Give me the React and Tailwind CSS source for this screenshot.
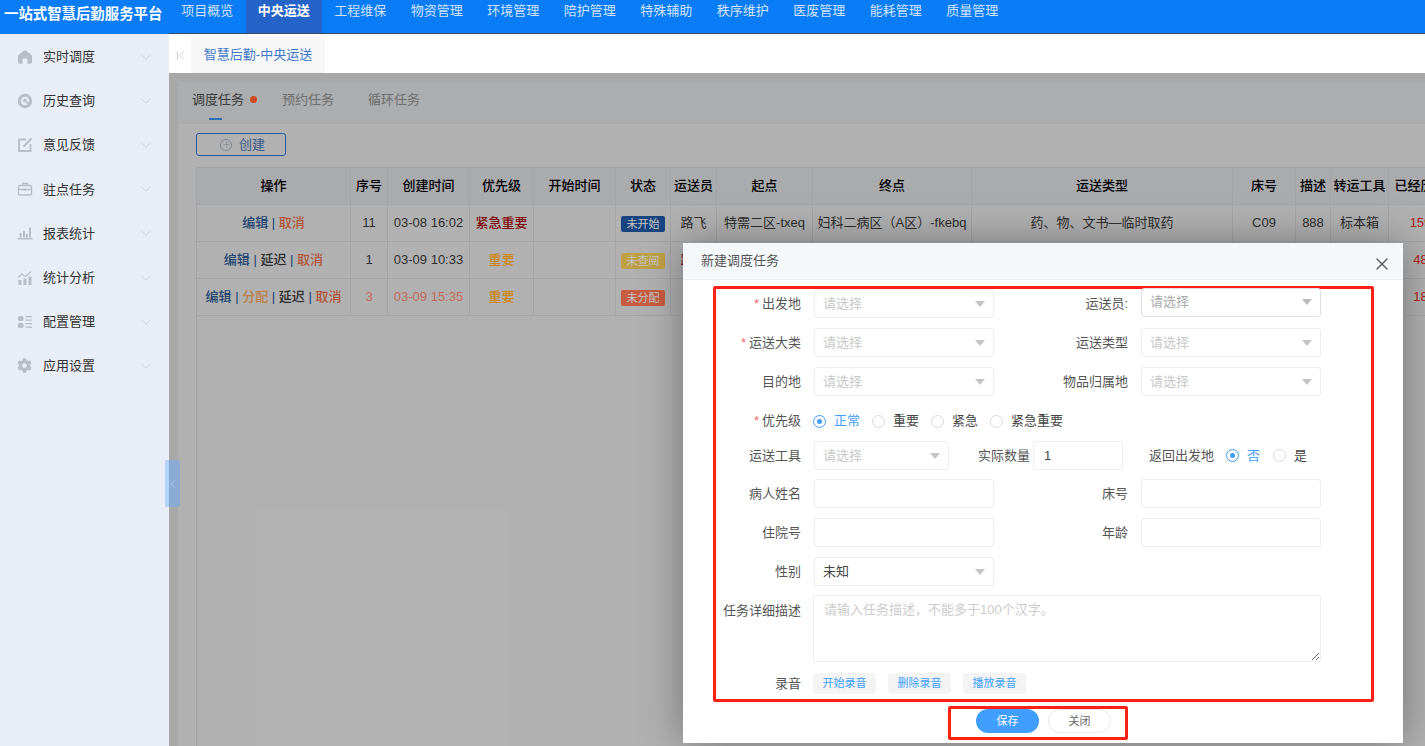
import { ChevronDown, ChevronFirst, ChevronLeft, Plus, X } from "lucide-react";
import { FaCog } from "react-icons/fa";

const navItems = ["项目概览", "中央运送", "工程维保", "物资管理", "环境管理", "陪护管理", "特殊辅助", "秩序维护", "医废管理", "能耗管理", "质量管理"];

const HomeIcon = () => (
	<svg width="16" height="16" viewBox="0 0 16 16" fill="#b9bdc9">
		<path d="M8 1.200c.4 0 .7.1 1 .4l5.300 4.200c.4.300.7.800.7 1.300V13c0 1-.8 1.700-1.700 1.700H10.500V10.500c0-.6-.4-1-1-1h-3c-.6 0-1 .4-1 1v4.200H2.700C1.800 14.700 1 14 1 13V7.100c0-.5.3-1 .7-1.300L7 1.600c.3-.3.600-.4 1-.4z" />
	</svg>
);

const HistoryIcon = () => (
	<svg width="16" height="16" viewBox="0 0 16 16" fill="none" stroke="#b9bdc9">
		<circle cx="8" cy="8" r="5.700" strokeWidth="3" />
		<circle cx="8" cy="7.500" r="1.500" fill="#b9bdc9" strokeWidth="1" />
		<path d="M9.500 9l3.500 2.500" strokeWidth="2" />
	</svg>
);

const EditIcon = () => (
	<svg width="16" height="16" viewBox="0 0 16 16" fill="none" stroke="#b9bdc9" strokeWidth="1.800">
		<path d="M9 2.500H2v11.500h11.500V7" />
		<path d="M6.500 9.500L14.500 1.500" strokeWidth="2.200" />
	</svg>
);

const CaseIcon = () => (
	<svg width="16" height="16" viewBox="0 0 16 16" fill="none" stroke="#b9bdc9" strokeWidth="1.300">
		<rect x="1.500" y="4.500" width="13" height="9.500" rx="1" />
		<path d="M5.500 4.500V2.500h5v2M1.500 8.500h13" />
		<rect x="6.700" y="7.500" width="2.600" height="2" fill="#b9bdc9" stroke="none" />
	</svg>
);

const BarsIcon = () => (
	<svg width="16" height="16" viewBox="0 0 16 16" fill="#b9bdc9">
		<rect x="0.500" y="13" width="15" height="1.500" />
		<rect x="2.500" y="8" width="2" height="4.500" />
		<rect x="6" y="6" width="2" height="6.500" />
		<rect x="9" y="9" width="2" height="3.500" />
		<rect x="12" y="2.500" width="2" height="10" />
	</svg>
);

const StatIcon = () => (
	<svg width="16" height="16" viewBox="0 0 16 16" fill="#b9bdc9">
		<rect x="1.500" y="10" width="3" height="5" />
		<rect x="6.500" y="8.500" width="3" height="6.500" />
		<rect x="11.500" y="6.500" width="3" height="8.500" />
		<path d="M1 7.500l4-3.500 3.500 2.500L14 1.500" fill="none" stroke="#b9bdc9" strokeWidth="1.200" />
	</svg>
);

const ListIcon = () => (
	<svg width="16" height="16" viewBox="0 0 16 16" fill="#b9bdc9">
		<rect x="1" y="2" width="5.500" height="5" rx="1.500" />
		<rect x="1" y="9" width="5.500" height="5" rx="1.500" />
		<rect x="8.500" y="2" width="6.500" height="1.300" />
		<rect x="8.500" y="5.500" width="6.500" height="1.300" />
		<rect x="8.500" y="9" width="6.500" height="1.300" />
		<rect x="8.500" y="12.500" width="6.500" height="1.300" />
	</svg>
);

const sideItems = [
	{ label: "实时调度", Icon: HomeIcon },
	{ label: "历史查询", Icon: HistoryIcon },
	{ label: "意见反馈", Icon: EditIcon },
	{ label: "驻点任务", Icon: CaseIcon },
	{ label: "报表统计", Icon: BarsIcon },
	{ label: "统计分析", Icon: StatIcon },
	{ label: "配置管理", Icon: ListIcon },
	{ label: "应用设置", Icon: () => <FaCog size={15} color="#b9bdc9" /> },
];

const Link = ({ className, children }) => <span className={className}>{children}</span>;
const Bar = () => <span className="text-[#24508c]"> | </span>;
const Edit = () => <Link className="text-[#30598f] font-medium">编辑</Link>;
const Cancel = () => <Link className="text-[#e06a48] font-medium">取消</Link>;
const Delay = () => <Link className="text-[#3a3a3a] font-medium">延迟</Link>;

const rows = [
	{
		actions: (
			<>
				<Edit />
				<Bar />
				<Cancel />
			</>
		),
		no: "11",
		time: "03-08 16:02",
		priority: "紧急重要",
		priorityCls: "text-[#a00c0c]",
		status: "未开始",
		statusCls: "bg-[#2056a0]",
		staff: "路飞",
		from: "特需二区-txeq",
		to: "妇科二病区（A区）-fkebq",
		type: "药、物、文书—临时取药",
		bed: "C09",
		desc: "888",
		tool: "标本箱",
		spent: "159",
	},
	{
		actions: (
			<>
				<Edit />
				<Bar />
				<Delay />
				<Bar />
				<Cancel />
			</>
		),
		no: "1",
		time: "03-09 10:33",
		priority: "重要",
		priorityCls: "text-[#ffa814]",
		status: "未查阅",
		statusCls: "bg-[#efc955]",
		staff: "路飞",
		staffCls: "text-[#8a1030]",
		spent: "48",
	},
	{
		actions: (
			<>
				<Edit />
				<Bar />
				<Link className="text-[#eaa05c] font-medium">分配</Link>
				<Bar />
				<Delay />
				<Bar />
				<Cancel />
			</>
		),
		no: "3",
		time: "03-09 15:35",
		late: true,
		priority: "重要",
		priorityCls: "text-[#ffa814]",
		status: "未分配",
		statusCls: "bg-[#f97350]",
		spent: "18",
	},
];

const Th = ({ w, children }) => (
	<th className="border border-[#cdcfd3] bg-[#d4d6d9] p-0 text-center font-medium text-black" style={{ width: w }}>
		{children}
	</th>
);

const Td = ({ className = "", children }) => (
	<td className={`border border-[#cdcfd3] p-0 text-center whitespace-nowrap overflow-hidden ${className}`}>{children}</td>
);

const Label = ({ required, w = "w-[85px]", children }) => (
	<label className={`${w} shrink-0 text-right text-[#555]`}>
		{required && <span className="text-[#f56c6c] mr-[3px]">*</span>}
		{children}
	</label>
);

const Select = ({ w = "w-[180px]", value, dark, className = "" }) => (
	<div className={`${w} ${className} h-full shrink-0 flex items-center justify-between pl-[8px] pr-[8px] bg-white rounded-[3px] border ${dark ? "border-[#e2e2e2]" : "border-[#eeeeee]"}`}>
		<span className={value ? "text-[#444]" : dark ? "text-[#aaaaaa]" : "text-[#c8c8c8]"}>{value || "请选择"}</span>
		<svg width="10" height="6" viewBox="0 0 10 6" fill={dark ? "#bbbbbb" : "#c4c4c4"}>
			<path d="M0 0h10L5 6z" />
		</svg>
	</div>
);

const Input = ({ w = "w-[180px]", value }) => (
	<input
		readOnly
		value={value || ""}
		className={`${w} h-full shrink-0 px-[10px] text-[#444] bg-white rounded-[3px] border border-[#eeeeee] outline-none`}
	/>
);

const Radio = ({ checked, label, className = "" }) => (
	<span className={`flex items-center gap-[8px] ${className}`}>
		<span className={`w-[13px] h-[13px] rounded-full border flex items-center justify-center ${checked ? "border-[#409eff]" : "border-[#d9d9d9]"}`}>
			{checked && <span className="w-[5px] h-[5px] rounded-full bg-[#409eff]" />}
		</span>
		<span className={checked ? "text-[#409eff]" : "text-[#444]"}>{label}</span>
	</span>
);

const RecBtn = ({ children }) => (
	<button className="w-[63px] h-[21px] rounded-[4px] bg-[#f4f4f5] text-[#409eff] text-[11px]">{children}</button>
);

const App = () => {
	return (
		<div className="h-screen w-full flex flex-col overflow-hidden text-[13px] [font-family:'Liberation_Sans','Noto_Sans_CJK_SC',sans-serif]">
			{/* Header */}
			<header className="h-[34px] shrink-0 flex bg-[#0a7cf6]">
				<div className="w-[169px] shrink-0 pl-[4px] pt-[3px] text-[14.4px] leading-[22px] font-bold text-white whitespace-nowrap">一站式智慧后勤服务平台</div>
				<nav className="flex-1 h-[34px] flex border-b border-[#3b4a5c]">
					{navItems.map((item) => (
						<a
							key={item}
							className={`w-[76.5px] h-[33px] text-center leading-[22px] whitespace-nowrap ${item === "中央运送" ? "bg-[#2563c8] text-white font-bold" : "text-[#cfe3fb]"}`}
						>
							{item}
						</a>
					))}
				</nav>
			</header>

			<div className="flex-1 flex min-h-0">
				{/* Sidebar */}
				<aside className="w-[169px] shrink-0 bg-[#e9edf5] pt-[1px]">
					{sideItems.map(({ label, Icon }) => (
						<div key={label} className="h-[44.100px] flex items-center pl-[17px] pr-[18px] text-[#333]">
							<span className="w-[26px] shrink-0">
								<Icon />
							</span>
							<span className="flex-1">{label}</span>
							<ChevronDown size={18} strokeWidth={1} color="#c5cad6" className="-mr-[4px]" />
						</div>
					))}
				</aside>

				<main className="flex-1 min-w-0 flex flex-col">
					{/* Tab bar */}
					<div className="h-[39px] shrink-0 bg-white flex pt-[3px]">
						<button className="w-[22px] flex items-center justify-center">
							<ChevronFirst size={15} strokeWidth={1.500} color="#c5c8ce" />
						</button>
						<div className="w-[134px] bg-[#f7f7f7] flex items-center justify-center text-[#3f78c8]">智慧后勤-中央运送</div>
					</div>

					<div className="relative flex-1 min-h-0">
						{/* Page */}
						<div className="absolute inset-0 overflow-hidden bg-[#d2d2d2] pt-[9px] pl-[9px]">
							<div className="h-full bg-[#dedede]">
								<div className="h-[42px] flex bg-[#d7d9da] pl-[14px] pb-[6px] border-b border-[#d6d6d6]">
									<div className="relative h-full flex items-center text-[#4a4a4a]">
										调度任务
										<span className="ml-[6px] w-[7px] h-[7px] rounded-full bg-[#ff5c2a]" />
										<span className="absolute left-[17px] bottom-[-3px] w-[13px] h-[2px] bg-[#3a8ae0]" />
									</div>
									<div className="ml-[25px] h-full flex items-center text-[#8a8a8a]">预约任务</div>
									<div className="ml-[34px] h-full flex items-center text-[#8a8a8a]">循环任务</div>
								</div>
								<div className="pl-[18px] pt-[9px]">
									<button className="w-[90px] h-[23px] flex items-center gap-[7px] pl-[23px] rounded-[3px] border border-[#3570c0] text-[#4a72ac]">
										<span className="w-[12px] h-[12px] rounded-full border border-[#9ba6b8] flex items-center justify-center">
											<Plus size={9} strokeWidth={1} color="#7b8aa2" />
										</span>
										创建
									</button>
									<div className="mt-[11px] h-[600px] border-l border-[#cdcfd3]">
										<table className="-ml-px table-fixed border-collapse w-[1256px]">
											<thead>
												<tr className="h-[37px]">
													<Th w={154}>操作</Th>
													<Th w={37}>序号</Th>
													<Th w={82}>创建时间</Th>
													<Th w={64}>优先级</Th>
													<Th w={82}>开始时间</Th>
													<Th w={55}>状态</Th>
													<Th w={46}>运送员</Th>
													<Th w={96}>起点</Th>
													<Th w={159}>终点</Th>
													<Th w={261}>运送类型</Th>
													<Th w={63}>床号</Th>
													<Th w={35}>描述</Th>
													<Th w={58}>转运工具</Th>
													<Th w={64}>已经历时</Th>
												</tr>
											</thead>
											<tbody className="text-[#3a3a3a]">
												{rows.map((r) => (
													<tr key={r.no} className="h-[37px]">
														<Td>{r.actions}</Td>
														<Td className={r.late ? "text-[#f08570]" : ""}>{r.no}</Td>
														<Td className={r.late ? "text-[#f08570]" : ""}>{r.time}</Td>
														<Td className={`font-medium ${r.priorityCls}`}>{r.priority}</Td>
														<Td />
														<Td>
															<span className={`inline-flex w-[44px] h-[16px] items-center justify-center align-middle rounded-[2px] text-[11px] text-[#f5f5f5] ${r.statusCls}`}>{r.status}</span>
														</Td>
														<Td className={r.staffCls || ""}>{r.staff}</Td>
														<Td>{r.from}</Td>
														<Td>{r.to}</Td>
														<Td>{r.type}</Td>
														<Td>{r.bed}</Td>
														<Td>{r.desc}</Td>
														<Td>{r.tool}</Td>
														<Td className="text-[#dc2828]">{r.spent}</Td>
													</tr>
												))}
											</tbody>
										</table>
									</div>
								</div>
							</div>
						</div>

						{/* Backdrop */}
						<div className="absolute inset-0 bg-black/20" />

						{/* Sidebar handle */}
						<div className="absolute left-[-4px] top-[387px] w-[15px] h-[47px] flex rounded-r-[3px] overflow-hidden">
							<span className="w-[4px] bg-[#b4d4fb]" />
							<span className="w-[11px] bg-[#89abd6] flex items-center justify-center">
								<ChevronLeft size={14} strokeWidth={1} color="#c5d5ea" className="-ml-[3px]" />
							</span>
						</div>

						{/* Modal */}
						<div className="absolute left-[514px] top-[170px] w-[720px] h-[500px] bg-white shadow-[0_0_40px_rgba(0,0,0,0.35)]">
							<div className="h-[37px] flex justify-between bg-[#f5f8fb] border-b border-[#eeeeee] pl-[18px] pr-[11px]">
								<span className="leading-[35px] text-[#555]">新建调度任务</span>
								<X size={20} strokeWidth={1.600} color="#555" className="mt-[11px]" />
							</div>

							{/* Form */}
							<div className="ml-[30px] mt-[6px] w-[661px] h-[416px] border-[3px] border-[#ff2015] rounded-[2px] flex flex-col">
								<div className="h-[29px] shrink-0 flex items-center gap-[13px]">
									<Label required>出发地</Label>
									<Select />
									<Label w="w-[121px]">运送员:</Label>
									<Select dark className="-mt-[3px]" />
								</div>
								<div className="h-[29px] mt-[10px] shrink-0 flex items-center gap-[13px]">
									<Label required>运送大类</Label>
									<Select />
									<Label w="w-[121px]">运送类型</Label>
									<Select />
								</div>
								<div className="h-[29px] mt-[10px] shrink-0 flex items-center gap-[13px]">
									<Label>目的地</Label>
									<Select />
									<Label w="w-[121px]">物品归属地</Label>
									<Select />
								</div>
								<div className="h-[28px] mt-[11px] shrink-0 flex items-center gap-[12px]">
									<Label required>优先级</Label>
									<Radio checked label="正常" />
									<Radio label="重要" />
									<Radio label="紧急" />
									<Radio label="紧急重要" />
								</div>
								<div className="h-[29px] mt-[6px] shrink-0 flex items-center">
									<Label>运送工具</Label>
									<Select w="w-[135px] ml-[13px]" />
									<Label w="w-[52px] ml-[29px]">实际数量</Label>
									<Input w="w-[90px] ml-[3px]" value="1" />
									<Label w="w-[65px] ml-[26px]">返回出发地</Label>
									<Radio checked label="否" className="ml-[12px]" />
									<Radio label="是" className="ml-[13px]" />
								</div>
								<div className="h-[29px] mt-[9px] shrink-0 flex items-center gap-[13px]">
									<Label>病人姓名</Label>
									<Input />
									<Label w="w-[121px]">床号</Label>
									<Input />
								</div>
								<div className="h-[29px] mt-[10px] shrink-0 flex items-center gap-[13px]">
									<Label>住院号</Label>
									<Input />
									<Label w="w-[121px]">年龄</Label>
									<Input />
								</div>
								<div className="h-[29px] mt-[10px] shrink-0 flex items-center gap-[13px]">
									<Label>性别</Label>
									<Select value="未知" />
								</div>
								<div className="h-[67px] mt-[9px] shrink-0 flex gap-[12px]">
									<Label>
										<span className="block mt-[6px] -ml-[10px] whitespace-nowrap">任务详细描述</span>
									</Label>
									<textarea
										readOnly
										placeholder="请输入任务描述，不能多于100个汉字。"
										className="w-[508px] h-[67px] px-[10px] py-[4px] bg-white border border-[#eeeeee] rounded-[2px] outline-none placeholder:text-[#cccccc]"
									/>
								</div>
								<div className="h-[21px] mt-[11px] shrink-0 flex items-center gap-[12px]">
									<Label>录音</Label>
									<RecBtn>开始录音</RecBtn>
									<RecBtn>删除录音</RecBtn>
									<RecBtn>播放录音</RecBtn>
								</div>
							</div>

							{/* Footer */}
							<div className="ml-[265px] mt-[4px] w-[180px] h-[34px] border-[3px] border-[#ff2015] rounded-[2px] flex gap-[9px] pl-[25px]">
								<button className="w-[63px] h-[24px] rounded-full bg-[#409eff] text-white text-[11px]">保存</button>
								<button className="w-[63px] h-[24px] rounded-full bg-white border border-[#e8e8e8] text-[#666] text-[11px]">关闭</button>
							</div>
						</div>
					</div>
				</main>
			</div>
		</div>
	);
};

export default App;
